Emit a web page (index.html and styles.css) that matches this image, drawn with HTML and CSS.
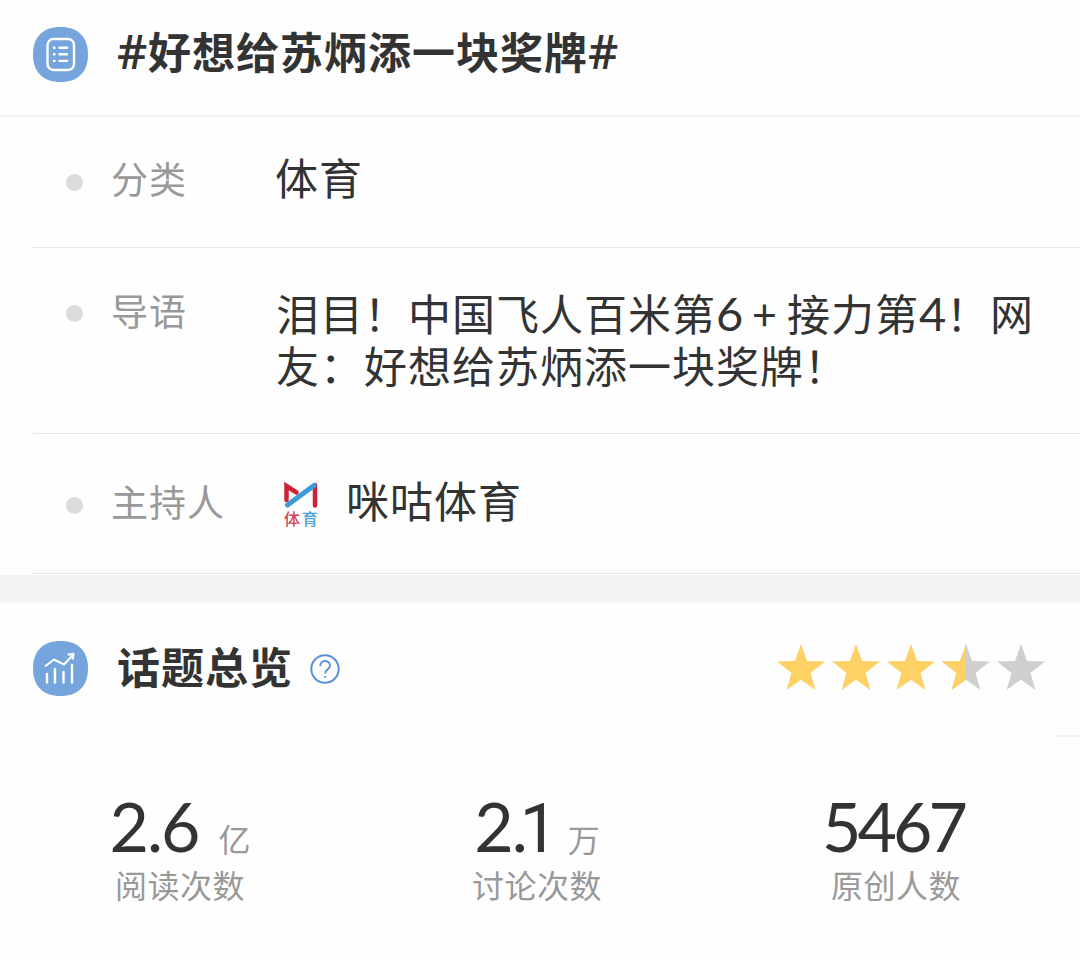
FILE: index.html
```
<!doctype html>
<html lang="zh-CN">
  <head>
    <meta charset="utf-8">
    <meta name="viewport" content="width=device-width, initial-scale=1">
    <link rel="stylesheet" href="styles.css">
    <title>话题详情</title>
  </head>
  <body>
    <header class="topic-header">
      <svg class="badge" viewBox="0 0 55 55">
        <path class="badge-bg" d="M27.500 0C45 0 55 10 55 27.500S45 55 27.500 55 0 45 0 27.500 10 0 27.500 0z"/>
        <rect class="line" x="14.500" y="12" width="26.500" height="31" rx="6"/>
        <path class="line" d="M26.500 20.800h7.500M26.500 27.300h7.500M26.500 33.900h7.500"/>
        <path class="line" d="M20.900 20.800h.6M20.900 27.300h.6M20.900 33.900h.6"/>
      </svg>
      <h1 class="title"><span class="hash">#</span>好想给苏炳添一块奖牌<span class="hash">#</span></h1>
    </header>

    <section class="info">
      <div class="row row-type">
        <span class="dot"></span>
        <span class="label">分类</span>
        <span class="value">体育</span>
      </div>
      <div class="row row-intro">
        <span class="dot"></span>
        <span class="label">导语</span>
        <p class="value">泪目！中国飞人百米第<span class="digit">6</span><span class="plus">+</span>接力第<span class="digit">4</span>！网<br>友：好想给苏炳添一块奖牌！</p>
      </div>
      <div class="row row-host">
        <span class="dot"></span>
        <span class="label">主持人</span>
        <svg class="avatar" viewBox="0 0 36 48">
          <path class="logo-red" d="M3.500 19V5l10 6.500M32 4v20.500"/>
          <path class="logo-blue" d="M4.500 24L31 4.500"/>
          <text class="logo-text red" x="1" y="44">体</text>
          <text class="logo-text blue" x="19" y="44">育</text>
        </svg>
        <span class="value">咪咕体育</span>
      </div>
    </section>

    <div class="divider"></div>

    <section class="overview">
      <div class="overview-header">
        <svg class="badge" viewBox="0 0 55 55">
          <path class="badge-bg" d="M27.500 0C45 0 55 10 55 27.500S45 55 27.500 55 0 45 0 27.500 10 0 27.500 0z"/>
          <path class="line thin" d="M12.500 25l8.500-6.500 10 5L40 14M35.500 13.500l5-.8-.5 5"/>
          <path class="line bars" d="M14 33v8.500M22 28v13.500M30.500 31v10.500M39 24v17.500"/>
        </svg>
        <h2 class="title">话题总览</h2>
        <svg class="help" viewBox="0 0 30 30">
          <circle cx="15" cy="15" r="13.700"/>
          <path d="M10.300 12c0-3 2-5 4.800-5s4.900 1.900 4.900 4.500c0 3.700-4.800 4-4.800 8M15.200 22v1.800"/>
        </svg>
        <svg class="stars" viewBox="0 0 268 46">
          <defs>
            <path id="star" d="M24 0l6 17 18 .500-14.500 11.500 5 17L24 35.700 9.500 46l5-17L0 17.500 18 17z"/>
            <clipPath id="half"><rect width="24" height="46"/></clipPath>
          </defs>
          <use class="on" href="#star"/>
          <use class="on" href="#star" x="55"/>
          <use class="on" href="#star" x="110"/>
          <use class="off" href="#star" x="165"/>
          <g transform="translate(165)"><use class="on" href="#star" clip-path="url(#half)"/></g>
          <use class="off" href="#star" x="220"/>
        </svg>
      </div>
      <div class="short-line"></div>
      <div class="stats">
        <div class="stat">
          <div class="number">2.6<span class="unit">亿</span></div>
          <div class="caption">阅读次数</div>
        </div>
        <div class="stat">
          <div class="number">2.<span class="one">1</span><span class="unit">万</span></div>
          <div class="caption">讨论次数</div>
        </div>
        <div class="stat">
          <div class="number tight">5467</div>
          <div class="caption">原创人数</div>
        </div>
      </div>
    </section>
  </body>
</html>
```
FILE: styles.css
```
* {
  box-sizing: border-box;
}

body {
  margin: 0;
  background: #fefefe;
  color: #333;
  font-family: "Noto Sans CJK SC", sans-serif;
}

h1, h2, p {
  margin: 0;
}

.topic-header {
  display: flex;
  align-items: center;
  height: 117px;
  padding: 0 0 7px 33px;
  border-bottom: 2px solid #f0f0f0;
}

.badge {
  width: 55px;
  height: 55px;
  margin-right: 29px;
  flex: none;
}

.badge-bg {
  fill: #75a5dc;
}

.line {
  fill: none;
  stroke: #fff;
  stroke-width: 2.4;
  stroke-linecap: round;
  stroke-linejoin: round;
}

.thin {
  stroke-width: 2;
}

.bars {
  stroke-width: 2.4;
}

.title {
  padding-bottom: 8px;
  font-size: 43px;
  font-weight: 700;
  line-height: 56px;
  letter-spacing: 1px;
  white-space: nowrap;
}

.hash {
  display: inline-block;
  width: 31px;
  font-family: "Open Sans", sans-serif;
  font-size: 47px;
  font-weight: 600;
  line-height: 50px;
  letter-spacing: 0;
}

.info {
  padding-left: 33px;
}

.row {
  display: flex;
  border-bottom: 1px solid #e6e6e6;
}

.row-type {
  height: 131px;
  padding-top: 36px;
}

.row-intro {
  height: 186px;
  padding-top: 41px;
}

.row-host {
  height: 140px;
  padding-top: 42px;
}

.dot {
  width: 17px;
  height: 17px;
  margin: 21px 28px 0 33px;
  border-radius: 50%;
  background: #dcdcdc;
}

.row-intro .dot {
  margin-top: 16px;
}

.label {
  width: 164px;
  margin-top: -3px;
  color: #999;
  font-size: 37px;
  line-height: 56px;
  letter-spacing: 1px;
}

.row-intro .label {
  width: 165px;
  margin-top: -7px;
}

.value {
  margin-top: -3px;
  font-size: 43px;
  line-height: 52px;
  letter-spacing: 1px;
  white-space: nowrap;
}

.digit {
  display: inline-block;
  width: 27px;
  font-family: Lato, sans-serif;
  font-size: 47px;
  line-height: 40px;
  letter-spacing: 0;
}

.plus {
  display: inline-block;
  width: 44px;
  text-align: center;
}

.avatar {
  width: 36px;
  height: 48px;
  margin: 5px 27px 0 8px;
}

.logo-red, .logo-blue {
  fill: none;
  stroke: #ce2135;
  stroke-width: 4.5;
  stroke-linecap: round;
}

.logo-blue {
  stroke: #3d9bd9;
  stroke-width: 5;
}

.logo-text {
  font-size: 16px;
  font-weight: 500;
}

.red {
  fill: #d3455a;
}

.blue {
  fill: #4d9fd4;
}

.divider {
  height: 29px;
  margin-top: 1px;
  background: linear-gradient(#f3f3f3 85%, #fefefe);
}

.overview-header {
  display: flex;
  align-items: center;
  height: 131px;
  padding: 0 35px 2px 33px;
}

.help {
  width: 30px;
  height: 30px;
  margin-left: 17px;
  fill: none;
  stroke: #5b8fd8;
  stroke-width: 2;
}

.stars {
  width: 268px;
  height: 46px;
  margin: -3px 0 0 auto;
}

.on {
  fill: #fdd163;
}

.off {
  fill: #cfcfcf;
}

.short-line {
  width: 23px;
  height: 2px;
  margin-left: auto;
  background: #f0f0f0;
}

.stats {
  display: grid;
  grid-template-columns: 360px 354px 364px;
  padding-top: 52px;
}

.stat {
  text-align: center;
}

.number {
  height: 74px;
  font-family: Lato, sans-serif;
  font-size: 68px;
  line-height: 74px;
  letter-spacing: -2px;
}

.tight {
  padding-right: 6px;
  letter-spacing: -4px;
}

/* plain stroke without a foot */
.one {
  display: inline-block;
  width: 28px;
  margin-left: -6px;
  font-family: Roboto, sans-serif;
  text-align: left;
}

.unit {
  margin-left: 20px;
  color: #999;
  font-family: "Noto Sans CJK SC", sans-serif;
  font-size: 32px;
  line-height: 40px;
  letter-spacing: 0;
}

.caption {
  color: #999;
  font-size: 32px;
  line-height: 42px;
  letter-spacing: .5px;
}
```
